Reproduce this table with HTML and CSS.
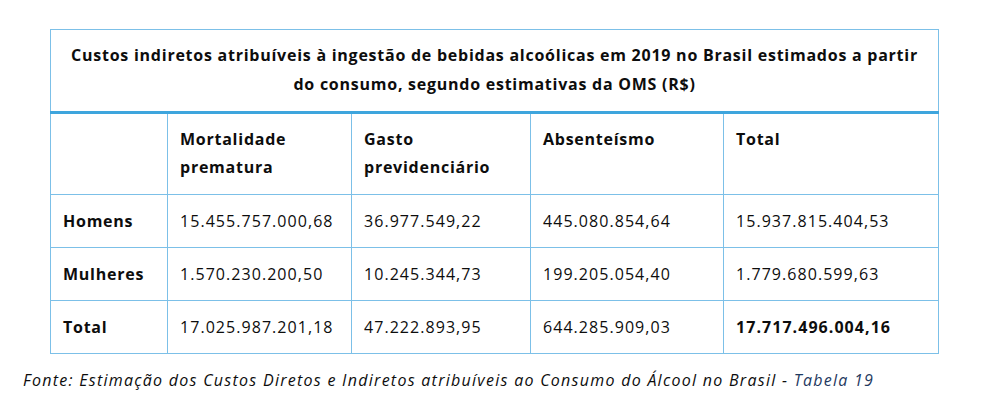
FILE: index.html
```html
<!DOCTYPE html>
<html lang="pt-BR">
<head>
<meta charset="utf-8">
<link rel="stylesheet" href="styles.css">
</head>
<body>
<div class="wrap">
<table class="costs">
  <colgroup>
    <col class="c0"><col class="c1"><col class="c2"><col class="c3"><col class="c4">
  </colgroup>
  <thead>
    <tr class="title-row">
      <th colspan="5" class="title">Custos indiretos atribuíveis à ingestão de bebidas alcoólicas em 2019 no Brasil estimados a partir<br>do consumo, segundo estimativas da OMS (R$)</th>
    </tr>
    <tr class="head-row">
      <th></th>
      <th>Mortalidade prematura</th>
      <th>Gasto previdenciário</th>
      <th>Absenteísmo</th>
      <th>Total</th>
    </tr>
  </thead>
  <tbody>
    <tr>
      <th>Homens</th>
      <td>15.455.757.000,68</td>
      <td>36.977.549,22</td>
      <td>445.080.854,64</td>
      <td>15.937.815.404,53</td>
    </tr>
    <tr>
      <th>Mulheres</th>
      <td>1.570.230.200,50</td>
      <td>10.245.344,73</td>
      <td>199.205.054,40</td>
      <td>1.779.680.599,63</td>
    </tr>
    <tr>
      <th>Total</th>
      <td>17.025.987.201,18</td>
      <td>47.222.893,95</td>
      <td>644.285.909,03</td>
      <td class="strong">17.717.496.004,16</td>
    </tr>
  </tbody>
</table>
<p class="source">Fonte: Estimação dos Custos Diretos e Indiretos atribuíveis ao Consumo do Álcool no Brasil - <span class="ref">Tabela 19</span></p>
</div>
</body>
</html>
```
FILE: styles.css
```css
html, body {
  margin: 0;
  padding: 0;
  background: #ffffff;
}
body {
  font-family: "Open Sans", "Liberation Sans", sans-serif;
  color: #0d0d0d;
  font-size: 16px;
}
.wrap {
  padding: 29px 0 0 23px;
}
.costs {
  margin-left: 27px;
  width: 888px;
  border-collapse: collapse;
  table-layout: fixed;
}
.c0 { width: 117px; }
.c1 { width: 184px; }
.c2 { width: 179px; }
.c3 { width: 193px; }
.c4 { width: 215px; }
.costs th, .costs td {
  border: 1px solid #7cc0e8;
  text-align: left;
  padding: 0 12px;
  line-height: 28px;
  white-space: nowrap;
}
.costs th {
  font-weight: 700;
  letter-spacing: 0.75px;
}
.costs td {
  font-weight: 500;
  letter-spacing: 1.05px;
}
.title-row .title {
  text-align: center;
  padding: 11px 10px 12px;
  line-height: 29px;
  border-bottom: 3px solid #3ea5dd;
}
.head-row th {
  vertical-align: top;
  padding: 11px 12px 13px;
  height: 56px;
  white-space: normal;
}
.costs tbody tr {
  height: 53px;
}
.costs tbody th, .costs tbody td {
  vertical-align: middle;
}
.costs .strong {
  font-weight: 700;
  letter-spacing: 1.05px;
}
.source {
  margin: 12px 0 0 0;
  font-style: italic;
  font-weight: 500;
  font-size: 16px;
  line-height: 28px;
  letter-spacing: 1.27px;
  color: #0d0d0d;
  white-space: nowrap;
}
.ref {
  color: #1f3a5f;
}
```
